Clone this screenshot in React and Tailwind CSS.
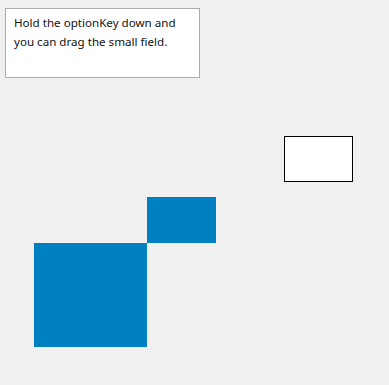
export default function App() {
  return (
    <main className="relative w-[389px] h-[385px] bg-[#f0f0f0] overflow-hidden" style={{ fontFamily: '"Noto Sans", "Open Sans", sans-serif' }}>
      <div className="ml-[5px] mt-[8px] w-[195px] h-[70px] bg-white border border-[#ababab] pl-[8px] pt-[4px] text-[11.6px] leading-[19px] text-[#111]">
        Hold the optionKey down and
        <br />
        you can drag the small field.
      </div>

      {/* draggable fields on the canvas */}
      <div className="absolute left-[284px] top-[136px] w-[69px] h-[46px] bg-white border border-black" />
      <div className="absolute left-[147px] top-[197px] w-[69px] h-[46px] bg-[#0080c0]" />
      <div className="absolute left-[34px] top-[243px] w-[113px] h-[104px] bg-[#0080c0]" />
    </main>
  )
}
